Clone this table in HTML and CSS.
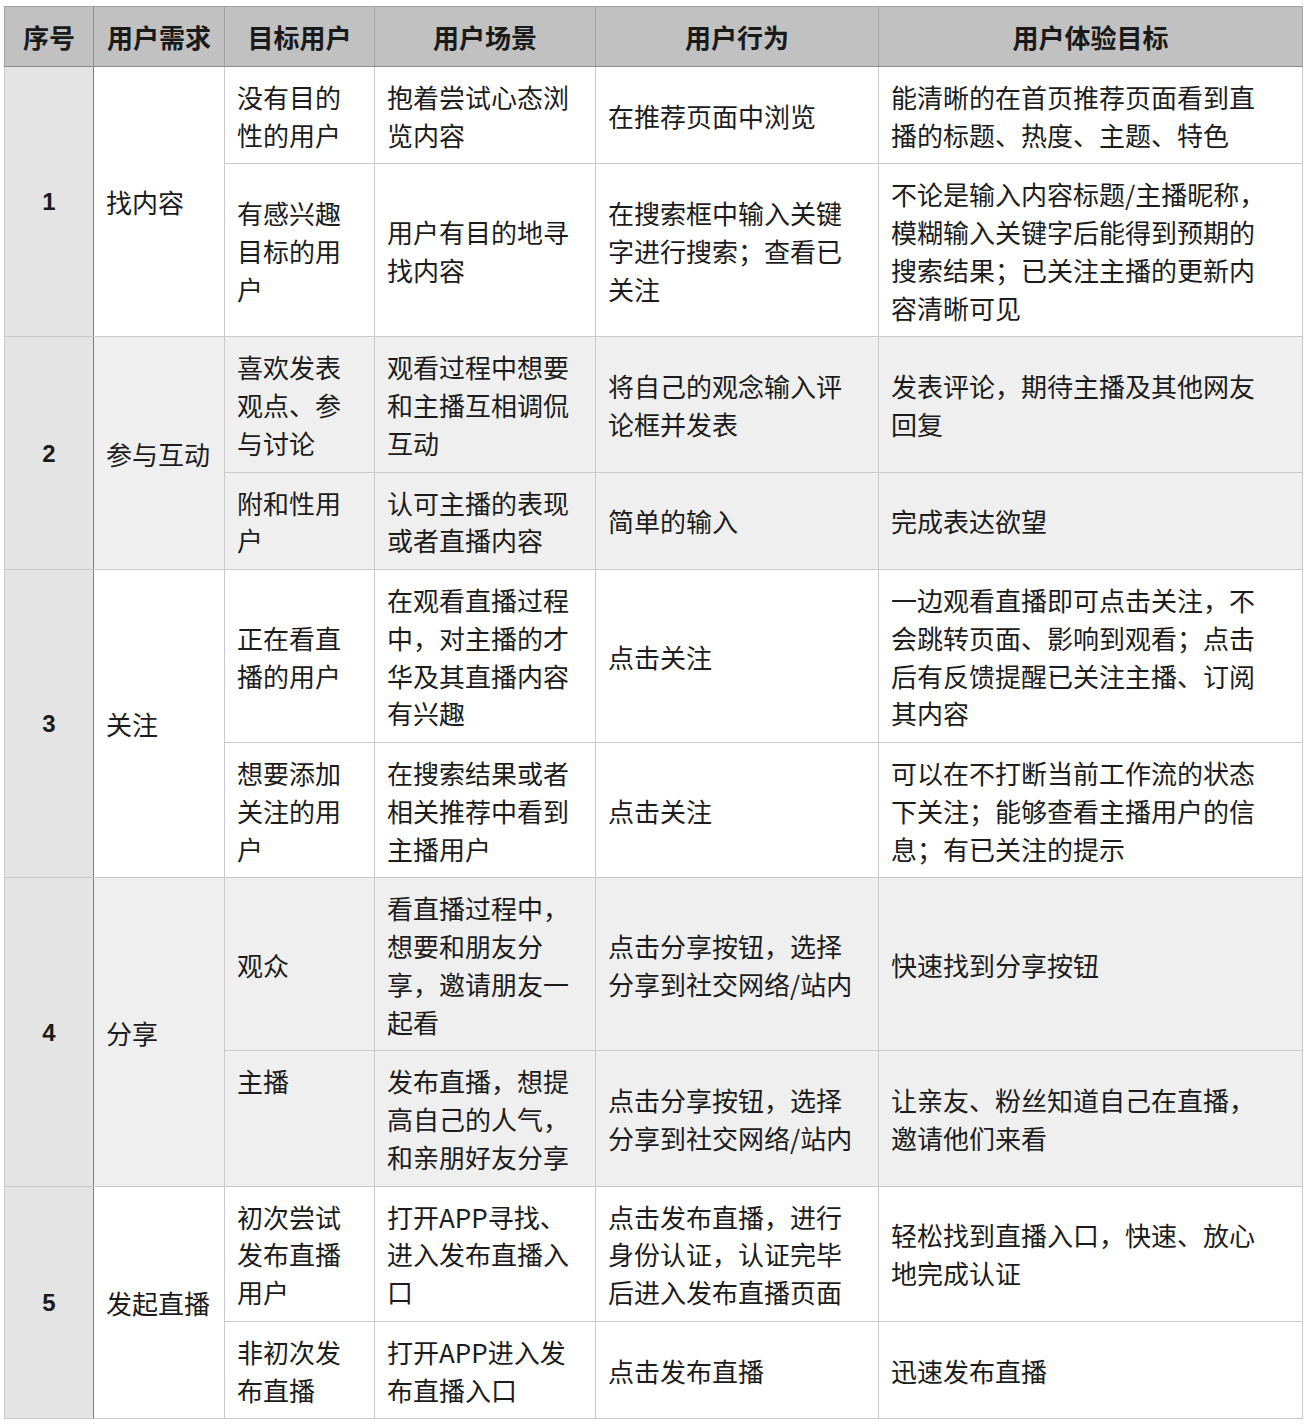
FILE: index.html
```html
<!DOCTYPE html>
<html lang="zh-CN">
<head>
<meta charset="utf-8">
<title>用户需求分析</title>
<link rel="stylesheet" href="styles.css">
</head>
<body>
<table class="req-table">
  <colgroup>
    <col class="c-no">
    <col class="c-need">
    <col class="c-user">
    <col class="c-scene">
    <col class="c-action">
    <col class="c-goal">
  </colgroup>
  <thead>
    <tr>
      <th>序号</th>
      <th>用户需求</th>
      <th>目标用户</th>
      <th>用户场景</th>
      <th>用户行为</th>
      <th>用户体验目标</th>
    </tr>
  </thead>
  <tbody class="group">
    <tr>
      <td class="no" rowspan="2">1</td>
      <td class="need" rowspan="2">找内容</td>
      <td>没有目的性的用户</td>
      <td>抱着尝试心态浏览内容</td>
      <td>在推荐页面中浏览</td>
      <td>能清晰的在首页推荐页面看到直播的标题、热度、主题、特色</td>
    </tr>
    <tr>
      <td>有感兴趣目标的用户</td>
      <td>用户有目的地寻找内容</td>
      <td>在搜索框中输入关键字进行搜索；查看已关注</td>
      <td>不论是输入内容标题/主播昵称，模糊输入关键字后能得到预期的搜索结果；已关注主播的更新内容清晰可见</td>
    </tr>
  </tbody>
  <tbody class="group alt">
    <tr>
      <td class="no" rowspan="2">2</td>
      <td class="need" rowspan="2">参与互动</td>
      <td>喜欢发表观点、参与讨论</td>
      <td>观看过程中想要和主播互相调侃互动</td>
      <td>将自己的观念输入评论框并发表</td>
      <td>发表评论，期待主播及其他网友回复</td>
    </tr>
    <tr>
      <td>附和性用户</td>
      <td>认可主播的表现或者直播内容</td>
      <td>简单的输入</td>
      <td>完成表达欲望</td>
    </tr>
  </tbody>
  <tbody class="group">
    <tr>
      <td class="no" rowspan="2">3</td>
      <td class="need" rowspan="2">关注</td>
      <td>正在看直播的用户</td>
      <td>在观看直播过程中，对主播的才华及其直播内容有兴趣</td>
      <td>点击关注</td>
      <td>一边观看直播即可点击关注，不会跳转页面、影响到观看；点击后有反馈提醒已关注主播、订阅其内容</td>
    </tr>
    <tr>
      <td>想要添加关注的用户</td>
      <td>在搜索结果或者相关推荐中看到主播用户</td>
      <td>点击关注</td>
      <td>可以在不打断当前工作流的状态下关注；能够查看主播用户的信息；有已关注的提示</td>
    </tr>
  </tbody>
  <tbody class="group alt">
    <tr>
      <td class="no" rowspan="2">4</td>
      <td class="need" rowspan="2">分享</td>
      <td>观众</td>
      <td>看直播过程中，想要和朋友分享，邀请朋友一起看</td>
      <td>点击分享按钮，选择分享到社交网络/站内</td>
      <td>快速找到分享按钮</td>
    </tr>
    <tr>
      <td class="top">主播</td>
      <td>发布直播，想提高自己的人气，和亲朋好友分享</td>
      <td>点击分享按钮，选择分享到社交网络/站内</td>
      <td>让亲友、粉丝知道自己在直播，邀请他们来看</td>
    </tr>
  </tbody>
  <tbody class="group">
    <tr>
      <td class="no" rowspan="2">5</td>
      <td class="need" rowspan="2">发起直播</td>
      <td>初次尝试发布直播用户</td>
      <td>打开APP寻找、进入发布直播入口</td>
      <td>点击发布直播，进行身份认证，认证完毕后进入发布直播页面</td>
      <td>轻松找到直播入口，快速、放心地完成认证</td>
    </tr>
    <tr>
      <td>非初次发布直播</td>
      <td>打开APP进入发布直播入口</td>
      <td>点击发布直播</td>
      <td>迅速发布直播</td>
    </tr>
  </tbody>
</table>
</body>
</html>
```

FILE: styles.css
```css
html, body {
  margin: 0;
  padding: 0;
  background: #ffffff;
}

body {
  padding: 6px 4px 0 4px;
  font-family: "Noto Sans CJK SC", "Liberation Sans", sans-serif;
  color: #1c1c1c;
}

.req-table {
  width: 1298px;
  table-layout: fixed;
  border-collapse: collapse;
  font-size: 26px;
  line-height: 37.75px;
}

.c-no { width: 89px; }
.c-need { width: 131px; }
.c-user { width: 150px; }
.c-scene { width: 221px; }
.c-action { width: 283px; }
.c-goal { width: 424px; }

.req-table th,
.req-table td {
  border: 1px solid #c9c9c9;
  padding: 11px 25px 10px 12px;
  vertical-align: middle;
  text-align: left;
  word-break: break-all;
}

.req-table thead th {
  background: #c0c1c0;
  font-weight: 700;
  text-align: center;
  padding: 11px 6px 10px 6px;
  border-color: #a3a4a3;
  border-bottom: 1px solid #8c8c8c;
  color: #1a1a1a;
}

.req-table td.no {
  background: #e3e4e3;
  font-family: "Liberation Sans", "Noto Sans CJK SC", sans-serif;
  font-weight: 700;
  font-size: 24px;
  text-align: center;
  padding: 11px 6px 10px 6px;
  border-right: 1px solid #7d7d7d;
}

.req-table thead th:first-child {
  border-right: 1px solid #8e8e8e;
}

.req-table td.need {
  padding-left: 12px;
  padding-right: 6px;
}

.req-table td.top {
  vertical-align: top;
}

.group.alt td:not(.no) {
  background: #efefef;
}
```
